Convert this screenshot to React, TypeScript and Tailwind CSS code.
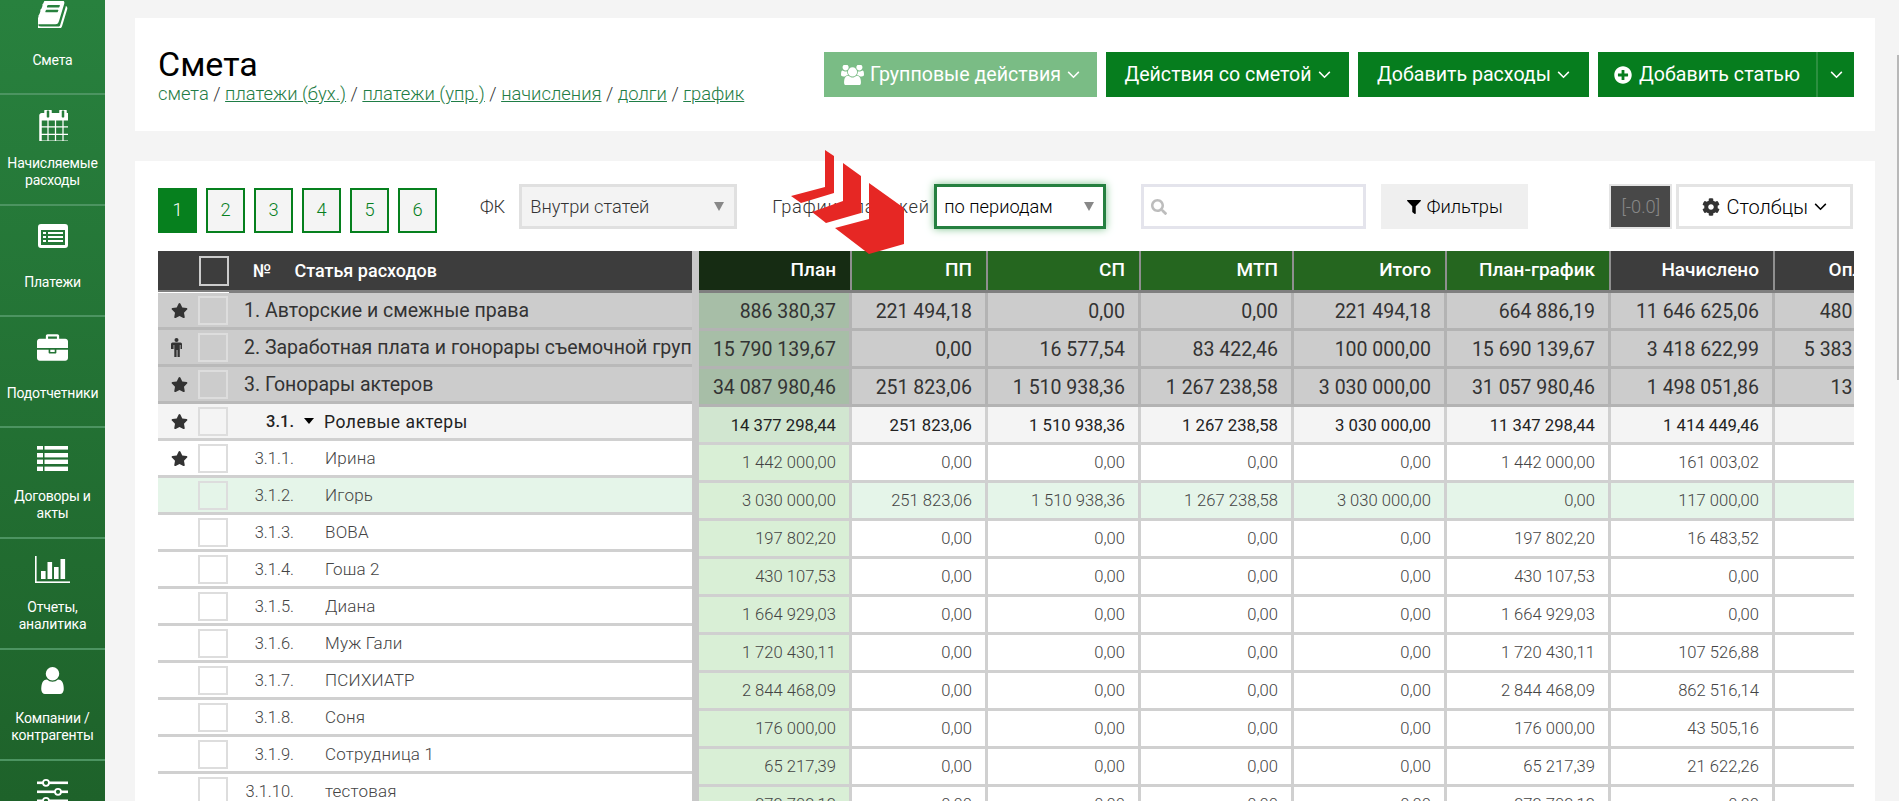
import { FaPlusCircle, FaFilter, FaCog, FaSearch, FaStar } from "react-icons/fa";

const SANS = "font-['Roboto','Liberation_Sans',sans-serif]";

// Font Awesome 4 drawings, the package only ships the later redraws
function BookIcon() {
  return (
    <svg viewBox="100 180 1600 1420" className="w-[30px] h-[27px]" fill="currentColor">
      <path d="M1639 478q40 57 18 129l-275 906q-19 64-76.5 107.5t-122.5 43.5h-923q-77 0-148.5-53.5t-99.5-131.5q-24-67-2-127 0-4 3-27t4-37q1-8-3-21.5t-3-19.5q2-11 8-21t16.5-23.5 16.5-23.5q23-38 45-91.5t30-91.5q3-10 .5-30t-.5-28q3-11 17-28t17-23q21-36 42-92t25-90q1-9-2.5-32t.5-28q4-13 22-30.5t22-22.5q19-26 42.5-84.5t27.5-96.5q1-8-3-25.5t-2-26.5q2-8 9-18t18-23 17-21q8-12 16.5-30.5t15-35 16-36 19.5-32 26.5-23.5 36-11.5 47.5 5.5l-1 3q38-9 51-9h761q74 0 114 56t18 130l-274 906q-36 119-71.5 153.5t-128.5 34.5h-869q-27 0-38 15-11 16-1 43 24 70 144 70h923q29 0 56-15.5t35-41.5l300-987q7-22 5-57 38 15 59 43zm-1064 2q-4 13 2 22.5t20 9.5h608q13 0 25.5-9.5t16.5-22.5l21-64q4-13-2-22.5t-20-9.5h-608q-13 0-25.5 9.5t-16.5 22.5zm-83 256q-4 13 2 22.5t20 9.5h608q13 0 25.5-9.5t16.5-22.5l21-64q4-13-2-22.5t-20-9.5h-608q-13 0-25.5 9.5t-16.5 22.5z" />
    </svg>
  );
}

function CalendarIcon() {
  return (
    <svg viewBox="128 128 1536 1536" className="w-[30px] h-[31px]" fill="currentColor">
      <path d="M192 1664h288v-288h-288v288zm352 0h320v-288h-320v288zm-352-352h288v-320h-288v320zm352 0h320v-320h-320v320zm-352-384h288v-288h-288v288zm736 736h320v-288h-320v288zm-384-736h320v-288h-320v288zm768 736h288v-288h-288v288zm-384-352h320v-320h-320v320zm-352-864v-288q0-13-9.5-22.5t-22.5-9.5h-64q-13 0-22.5 9.5t-9.5 22.5v288q0 13 9.5 22.5t22.5 9.5h64q13 0 22.5-9.5t9.5-22.5zm736 864h288v-320h-288v320zm-384-384h320v-288h-320v288zm384 0h288v-288h-288v288zm32-480v-288q0-13-9.5-22.5t-22.5-9.5h-64q-13 0-22.5 9.5t-9.5 22.5v288q0 13 9.5 22.5t22.5 9.5h64q13 0 22.5-9.5t9.5-22.5zm384-64v1280q0 52-38 90t-90 38h-1408q-52 0-90-38t-38-90v-1280q0-52 38-90t90-38h128v-96q0-66 47-113t113-47h64q66 0 113 47t47 113v96h384v-96q0-66 47-113t113-47h64q66 0 113 47t47 113v96h128q52 0 90 38t38 90z" transform="translate(128 0)" />
    </svg>
  );
}

function ListAltIcon() {
  return (
    <svg viewBox="0 0 30 24" className="w-[30px] h-[24px]" fill="currentColor">
      <path fillRule="evenodd" d="M3 0h24a3 3 0 0 1 3 3v18a3 3 0 0 1-3 3H3a3 3 0 0 1-3-3V3a3 3 0 0 1 3-3zM3 6v15h24V6zM5 8h3v2H5zM10 8h15v2H10zM5 12h3v2H5zM10 12h15v2H10zM5 16h3v2H5zM10 16h15v2H10z" />
    </svg>
  );
}

function BriefcaseIcon() {
  return (
    <svg viewBox="0 0 1792 1536" className="w-[31px] h-[27px]" fill="currentColor">
      <path d="M640 256h512v-128h-512v128zm1152 640v480q0 66-47 113t-113 47h-1472q-66 0-113-47t-47-113v-480h672v160q0 26 19 45t45 19h320q26 0 45-19t19-45v-160h672zm-768 0v128h-256v-128h256zm768-480v384h-1792v-384q0-66 47-113t113-47h352v-160q0-40 28-68t68-28h576q40 0 68 28t28 68v160h352q66 0 113 47t47 113z" />
    </svg>
  );
}

function ThListIcon() {
  return (
    <svg viewBox="0 0 31 25" className="w-[31px] h-[25px]" fill="currentColor">
      <rect x="0" y="0" width="6" height="3.6" /><rect x="7.5" y="0" width="23.5" height="3.6" />
      <rect x="0" y="7" width="6" height="4.4" /><rect x="7.5" y="7" width="23.5" height="4.4" />
      <rect x="0" y="13.6" width="6" height="4.4" /><rect x="7.5" y="13.6" width="23.5" height="4.4" />
      <rect x="0" y="20.6" width="6" height="4.4" /><rect x="7.5" y="20.6" width="23.5" height="4.4" />
    </svg>
  );
}

function ChartIcon() {
  return (
    <svg viewBox="0 0 35 27" className="w-[35px] h-[27px]" fill="currentColor">
      <rect x="0" y="0" width="1.6" height="27" />
      <rect x="0" y="25.4" width="35" height="1.6" />
      <rect x="6" y="15" width="4.6" height="8" />
      <rect x="12.5" y="6" width="4.6" height="17" />
      <rect x="19" y="11" width="4.6" height="12" />
      <rect x="25.5" y="3" width="4.6" height="20" />
    </svg>
  );
}

function UserIcon() {
  return (
    <svg viewBox="256 128 1280 1536" className="w-[23px] h-[27px]" fill="currentColor">
      <path d="M1536 1399q0 109-62.5 187t-150.5 78h-854q-88 0-150.5-78t-62.5-187q0-85 8.5-160.5t31.5-152 58.5-131 94-89 134.5-34.5q131 128 313 128t313-128q76 0 134.5 34.5t94 89 58.5 131 31.5 152 8.5 160.5zm-256-887q0 159-112.5 271.5t-271.5 112.5-271.5-112.5-112.5-271.5 112.5-271.5 271.5-112.5 271.5 112.5 112.5 271.5z" />
    </svg>
  );
}

function SlidersIcon() {
  return (
    <svg viewBox="0 0 31 32" className="w-[31px] h-[32px]" fill="currentColor">
      <rect x="0" y="6.5" width="31" height="2.6" />
      <circle cx="9" cy="7.8" r="3" fill="#1f662c" stroke="#fff" strokeWidth="1.8" />
      <rect x="0" y="15.5" width="31" height="2.6" />
      <circle cx="21" cy="16.8" r="3" fill="#1f662c" stroke="#fff" strokeWidth="1.8" />
      <rect x="0" y="24.5" width="31" height="2.6" />
      <circle cx="9" cy="25.8" r="3" fill="#1f662c" stroke="#fff" strokeWidth="1.8" />
    </svg>
  );
}

function UsersIcon() {
  return (
    <svg viewBox="0 128 1920 1536" className="w-[23px] h-[20px]" fill="currentColor">
      <path d="M593 896q-162 5-265 128h-134q-82 0-138-40.5t-56-118.5q0-353 124-353 6 0 43.5 21t97.5 42.5 119 21.5q67 0 133-23-5 37-5 66 0 139 81 256zm1071 637q0 120-73 189.5t-194 69.5h-874q-121 0-194-69.5t-73-189.5q0-53 3.5-103.5t14-109 26.5-108.5 43-97.5 62-81 85.5-53.5 111.5-20q10 0 43 21.5t73 48 107 48 135 21.5 135-21.5 107-48 73-48 43-21.5q61 0 111.5 20t85.5 53.5 62 81 43 97.5 26.5 108.5 14 109 3.5 103.5zm-1024-1277q0 106-75 181t-181 75-181-75-75-181 75-181 181-75 181 75 75 181zm704 384q0 159-112.5 271.5t-271.5 112.5-271.5-112.5-112.5-271.5 112.5-271.5 271.5-112.5 271.5 112.5 112.5 271.5zm576 225q0 78-56 118.5t-138 40.5h-134q-103-123-265-128 81-117 81-256 0-29-5-66 66 23 133 23 59 0 119-21.5t97.5-42.5 43.5-21q124 0 124 353zm-128-609q0 106-75 181t-181 75-181-75-75-181 75-181 181-75 181 75 75 181z" />
    </svg>
  );
}

function ManIcon() {
  return (
    <svg viewBox="0 0 11 19" className="w-[11px] h-[19px]" fill="currentColor">
      <circle cx="5.5" cy="2" r="2" />
      <path d="M1.5 4.5h8a1.5 1.5 0 0 1 1.5 1.5v5h-1.5v-4h-.7v12h-2.3v-7h-.9v7h-2.3v-12h-.7v4H0V6a1.5 1.5 0 0 1 1.5-1.5z" />
    </svg>
  );
}

function Angle() {
  return (
    <svg viewBox="0 0 14 9" className="w-[13px] h-[8px]" fill="none" stroke="currentColor" strokeWidth="1.7">
      <polyline points="1,1 7,7 13,1" />
    </svg>
  );
}

function SelectArrow() {
  return <span className="w-0 h-0 border-x-[5px] border-x-transparent border-t-[9px] border-t-[#888]" />;
}

const NAV = [
  { label: ["Смета"], icon: <BookIcon /> },
  { label: ["Начисляемые", "расходы"], icon: <CalendarIcon /> },
  { label: ["Платежи"], icon: <ListAltIcon /> },
  { label: ["Подотчетники"], icon: <BriefcaseIcon /> },
  { label: ["Договоры и", "акты"], icon: <ThListIcon /> },
  { label: ["Отчеты,", "аналитика"], icon: <ChartIcon /> },
  { label: ["Компании /", "контрагенты"], icon: <UserIcon /> },
  { label: ["Настройки"], icon: <SlidersIcon /> },
];

const COLS = [
  { name: "План", w: "w-[153px]", head: "bg-[#162c13] pr-[14px]" },
  { name: "ПП", w: "w-[136px]", head: "bg-[#25661f] pr-[14px]" },
  { name: "СП", w: "w-[153px]", head: "bg-[#25661f] pr-[14px]" },
  { name: "МТП", w: "w-[153px]", head: "bg-[#25661f] pr-[14px]" },
  { name: "Итого", w: "w-[153px]", head: "bg-[#25661f] pr-[14px]" },
  { name: "План-график", w: "w-[164px]", head: "bg-[#25661f] pr-[14px]" },
  { name: "Начислено", w: "w-[164px]", head: "bg-[#3d3d3d] pr-[14px]" },
  { name: "Оплата", w: "w-[157px]", head: "bg-[#3d3d3d] pr-[37px]" },
];

type Row = { no: string; name: string; kind: "group" | "sub" | "item" | "hl"; icon?: "star" | "man"; v: string[] };

const ROWS: Row[] = [
  { no: "", name: "1. Авторские и смежные права", kind: "group", icon: "star", v: ["886 380,37", "221 494,18", "0,00", "0,00", "221 494,18", "664 886,19", "11 646 625,06", "480 115,40"] },
  { no: "", name: "2. Заработная плата и гонорары съемочной группы", kind: "group", icon: "man", v: ["15 790 139,67", "0,00", "16 577,54", "83 422,46", "100 000,00", "15 690 139,67", "3 418 622,99", "5 383 204,12"] },
  { no: "", name: "3. Гонорары актеров", kind: "group", icon: "star", v: ["34 087 980,46", "251 823,06", "1 510 938,36", "1 267 238,58", "3 030 000,00", "31 057 980,46", "1 498 051,86", "13 240,00"] },
  { no: "3.1.", name: "Ролевые актеры", kind: "sub", icon: "star", v: ["14 377 298,44", "251 823,06", "1 510 938,36", "1 267 238,58", "3 030 000,00", "11 347 298,44", "1 414 449,46", ""] },
  { no: "3.1.1.", name: "Ирина", kind: "item", icon: "star", v: ["1 442 000,00", "0,00", "0,00", "0,00", "0,00", "1 442 000,00", "161 003,02", ""] },
  { no: "3.1.2.", name: "Игорь", kind: "hl", v: ["3 030 000,00", "251 823,06", "1 510 938,36", "1 267 238,58", "3 030 000,00", "0,00", "117 000,00", ""] },
  { no: "3.1.3.", name: "ВОВА", kind: "item", v: ["197 802,20", "0,00", "0,00", "0,00", "0,00", "197 802,20", "16 483,52", ""] },
  { no: "3.1.4.", name: "Гоша 2", kind: "item", v: ["430 107,53", "0,00", "0,00", "0,00", "0,00", "430 107,53", "0,00", ""] },
  { no: "3.1.5.", name: "Диана", kind: "item", v: ["1 664 929,03", "0,00", "0,00", "0,00", "0,00", "1 664 929,03", "0,00", ""] },
  { no: "3.1.6.", name: "Муж Гали", kind: "item", v: ["1 720 430,11", "0,00", "0,00", "0,00", "0,00", "1 720 430,11", "107 526,88", ""] },
  { no: "3.1.7.", name: "ПСИХИАТР", kind: "item", v: ["2 844 468,09", "0,00", "0,00", "0,00", "0,00", "2 844 468,09", "862 516,14", ""] },
  { no: "3.1.8.", name: "Соня", kind: "item", v: ["176 000,00", "0,00", "0,00", "0,00", "0,00", "176 000,00", "43 505,16", ""] },
  { no: "3.1.9.", name: "Сотрудница 1", kind: "item", v: ["65 217,39", "0,00", "0,00", "0,00", "0,00", "65 217,39", "21 622,26", ""] },
  { no: "3.1.10.", name: "тестовая", kind: "item", v: ["272 702,12", "0,00", "0,00", "0,00", "0,00", "272 702,12", "0,00", ""] },
];

function leftRowClass(kind: Row["kind"]) {
  if (kind === "group") return "bg-[#cccccc] border-[#b9b9b9] text-[#333]";
  if (kind === "sub") return "bg-[#f4f4f4] border-[#d0d0d0] text-[#222]";
  if (kind === "hl") return "bg-[#e5f5e9] border-[#d0d0d0] text-[#444] font-light";
  return "bg-white border-[#d0d0d0] text-[#444] font-light";
}

function cellClass(kind: Row["kind"], first: boolean) {
  if (kind === "group") return (first ? "bg-[#a7bea7] " : "bg-[#cccccc] ") + "border-[#b3b3b3] text-[#333] text-[19.5px]";
  if (kind === "sub") return (first ? "bg-[#d1e6d0] " : "bg-[#f4f4f4] ") + "border-[#d0d0d0] text-[#222] text-[16.7px]";
  if (kind === "hl") return (first ? "bg-[#d9efd6] " : "bg-[#e5f5e9] ") + "border-[#d0d0d0] text-[#444] text-[16.6px] font-light";
  return (first ? "bg-[#d9efd6] " : "bg-white ") + "border-[#d0d0d0] text-[#444] text-[16.6px] font-light";
}

export default function App() {
  return (
    <div className={`${SANS} relative flex h-[801px] w-[1899px] overflow-hidden bg-[#f4f4f4]`}>
      {/* Sidebar */}
      <div className="w-[105px] shrink-0 h-full overflow-hidden bg-gradient-to-b from-[#28813e] to-[#1e622a] text-white">
        <div className="-mt-[16px]">
          {NAV.map((n) => (
            <div key={n.label[0]} className="h-[111px] border-b-2 border-[#4c9461] flex flex-col items-center pt-[14px]">
              <div className="h-[32px] flex items-center justify-center">{n.icon}</div>
              <div className="mt-[14px] h-[33px] flex flex-col justify-center text-[14px] leading-[16.5px] text-center tracking-[-0.2px]">
                {n.label.map((l) => (
                  <div key={l}>{l}</div>
                ))}
              </div>
            </div>
          ))}
        </div>
      </div>

      {/* Main */}
      <div className="flex-1 min-w-0 pl-[30px] pr-[24px] pt-[18px]">
        <div className="h-[113px] bg-white pl-[23px] pr-[21px] flex items-start justify-between">
          <div className="pt-[27px]">
            <div className="text-[34px] leading-[38px] text-black">Смета</div>
            <div className="text-[18.4px] leading-[21px] font-light text-[#333]">
              <span className="text-[#1f7d46]">смета</span> /{" "}
              <a className="text-[#1f7d46] underline">платежи (бух.)</a> /{" "}
              <a className="text-[#1f7d46] underline">платежи (упр.)</a> /{" "}
              <a className="text-[#1f7d46] underline">начисления</a> /{" "}
              <a className="text-[#1f7d46] underline">долги</a> /{" "}
              <a className="text-[#1f7d46] underline">график</a>
            </div>
          </div>
          <div className="flex gap-[9px] pt-[34px] text-white text-[19.6px]">
            <button className="h-[45px] w-[273px] bg-[#7abc85] flex items-center justify-center gap-[6px]">
              <UsersIcon /> Групповые действия <Angle />
            </button>
            <button className="h-[45px] w-[243px] bg-[#067d1e] flex items-center justify-center gap-[6px]">
              Действия со сметой <Angle />
            </button>
            <button className="h-[45px] w-[231px] bg-[#067d1e] flex items-center justify-center gap-[6px]">
              Добавить расходы <Angle />
            </button>
            <div className="h-[45px] w-[256px] bg-[#067d1e] flex items-center">
              <button className="flex-1 flex items-center justify-center gap-[7px] border-r-2 border-[#2c8f40] h-full">
                <FaPlusCircle className="w-[18px] h-[18px]" /> Добавить статью
              </button>
              <button className="w-[36px] flex items-center justify-center"><Angle /></button>
            </div>
          </div>
        </div>

        <div className="relative mt-[30px] h-[700px] bg-white pl-[23px] pr-[21px]">
          {/* Toolbar */}
          <div className="h-[90px] pt-[23px] flex items-start text-[18.3px] font-light text-[#333]">
            <div className="flex gap-[9px] mt-[4px]">
              {["1", "2", "3", "4", "5", "6"].map((p, i) => (
                <div key={p} className={i === 0 ? "w-[39px] h-[45px] bg-[#06801e] text-white flex items-center justify-center pb-[2px]" : "w-[39px] h-[45px] bg-[#f4f4f4] border-2 border-[#06801e] text-[#06801e] flex items-center justify-center pb-[2px]"}>{p}</div>
              ))}
            </div>
            <div className="ml-[43px] leading-[45px]">ФК</div>
            <div className="ml-[14px] w-[218px] h-[45px] bg-[#f3f3f3] border-[3px] border-[#e0e0e0] flex items-center justify-between pl-[8px] pr-[10px] text-[#333]">
              Внутри статей <SelectArrow />
            </div>
            <div className="ml-[35px] w-[162px] leading-[45px] tracking-[0.7px] whitespace-nowrap">График платежей</div>
            <div className="w-[172px] h-[45px] bg-white border-[3px] border-[#258040] shadow-[0_0_8px_#7fc48f] flex items-center justify-between pl-[7px] pr-[9px] text-black">
              по периодам <SelectArrow />
            </div>
            <div className="ml-[35px] w-[225px] h-[45px] bg-white border-[3px] border-[#e4e4ec] flex items-center pl-[7px]">
              <FaSearch className="w-[16px] h-[16px] text-[#bdbdbd]" />
            </div>
            <button className="ml-[15px] w-[147px] h-[45px] bg-[#efefef] flex items-center justify-center gap-[6px] text-black">
              <FaFilter className="w-[14px] h-[14px]" /> Фильтры
            </button>
            <div className="ml-[81px] w-[63px] h-[45px] bg-[#484848] border-[2px] border-[#e4e4e4] text-[#888] flex items-center justify-center">[-0.0]</div>
            <button className="ml-[4px] w-[177px] h-[45px] bg-white border-[3px] border-[#e4e4e4] flex items-center justify-center gap-[6px] text-black text-[20px]">
              <FaCog className="w-[18px] h-[18px] text-[#333]" /> Столбцы <Angle />
            </button>
          </div>

          {/* Table */}
          <div className="flex w-[1696px] h-[550px] overflow-hidden">
            <div className="w-[534px] shrink-0 overflow-hidden">
              <div className="relative h-[42px] bg-[#3d3d3d] border-b-[3px] border-[#7f7f7f] flex items-center text-white text-[18px] font-medium">
                <div className="ml-[41px] w-[30px] h-[30px] border-2 border-[#cccccc] shrink-0" />
                <div className="ml-[24px]">№</div>
                <div className="ml-[23px]">Статья расходов</div>
                <div className="absolute left-0 -bottom-[3px] w-[71px] h-px bg-white" />
              </div>
              {ROWS.map((r) => (
                <div key={r.name} className={`h-[37px] border-b-[3px] flex items-center whitespace-nowrap ${leftRowClass(r.kind)}`}>
                  <div className="w-[40px] shrink-0 pl-[13px] text-[#333]">
                    {r.icon === "star" && <FaStar className="w-[17px] h-[17px]" />}
                    {r.icon === "man" && <ManIcon />}
                  </div>
                  <div className="w-[30px] h-[29px] border-2 border-[#dddddd] shrink-0" />
                  {r.kind === "group" ? (
                    <div className="ml-[16px] pt-[2px] text-[19.5px]">{r.name}</div>
                  ) : (
                    <>
                      <div className={`w-[66px] pt-[2px] text-right shrink-0 text-[16.5px] ${r.kind === "sub" ? "font-medium" : ""}`}>{r.no}</div>
                      {r.kind === "sub" && <span className="ml-[10px] mr-[10px] w-0 h-0 border-x-[5px] border-x-transparent border-t-[6px] border-t-black" />}
                      <div className={r.kind === "sub" ? "pt-[2px] text-[17.5px] tracking-[0.5px]" : "ml-[31px] pt-[2px] text-[17px] tracking-[0.2px]"}>{r.name}</div>
                    </>
                  )}
                </div>
              ))}
            </div>
            <div className="w-[7px] shrink-0 bg-[#c8c8c8]" />
            <div className="flex-1 min-w-0 overflow-hidden">
              <div className="flex h-[42px] border-b-[3px] border-[#7f7f7f] text-white text-[19px] font-medium w-max">
                {COLS.map((c) => (
                  <div key={c.name} className={`${c.w} ${c.head} border-r-[2px] border-[#8f8f8f] flex items-center justify-end`}>{c.name}</div>
                ))}
              </div>
              {ROWS.map((r) => (
                <div key={r.name} className="flex h-[38px] w-max">
                  {COLS.map((c, i) => (
                    <div key={c.name} className={`${c.w} ${cellClass(r.kind, i === 0)} border-r-[3px] border-b-[3px] pr-[13px] pt-[2px] flex items-center justify-end whitespace-nowrap`}>{r.v[i]}</div>
                  ))}
                </div>
              ))}
            </div>
          </div>

          {/* red arrow laid over the toolbar */}
          <svg viewBox="0 0 200 130" className="absolute left-[645px] -top-[31px] w-[200px] h-[130px]" fill="#e62724">
            <polygon points="45,20 54,26 54,63 21,73 11,66 45,57" />
            <polygon points="63,33 81,46 81,83 46,93 32,82 63,71" />
            <polygon points="89,53 124,78 124,114 89,124 55,98 89,89" />
          </svg>
        </div>
      </div>

      {/* native scrollbar thumb at the window edge */}
      <div className="absolute right-0 top-[55px] w-[2px] h-[325px] bg-[#b8b8b8]" />
    </div>
  );
}
